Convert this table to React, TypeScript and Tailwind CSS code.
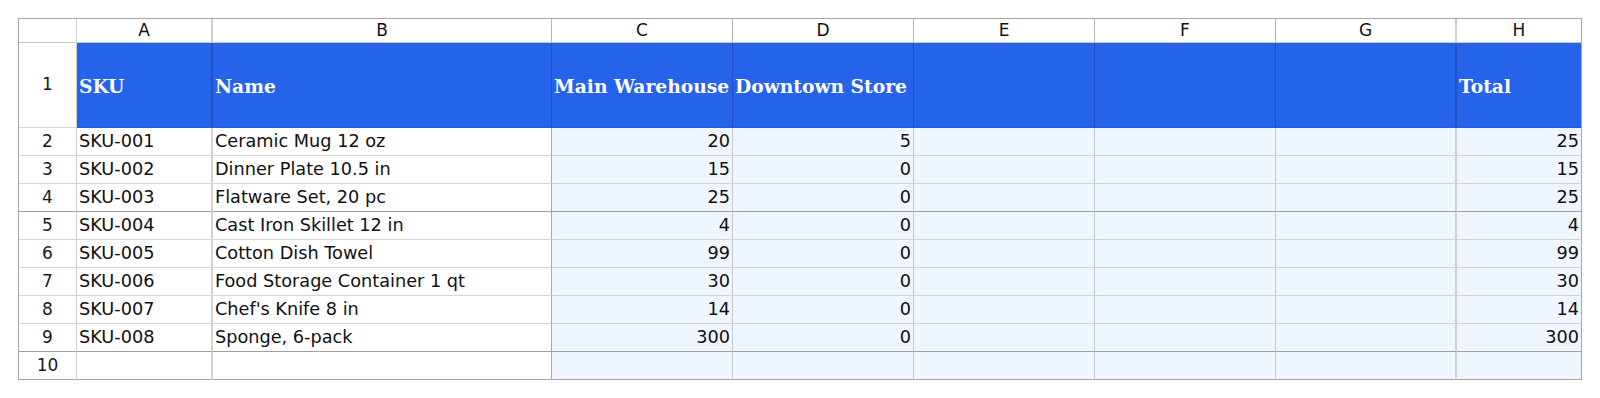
import React from 'react';

type Row = [string, string, number, number, number];

const rows: Row[] = [
    ['SKU-001', 'Ceramic Mug 12 oz', 20, 5, 25],
    ['SKU-002', 'Dinner Plate 10.5 in', 15, 0, 15],
    ['SKU-003', 'Flatware Set, 20 pc', 25, 0, 25],
    ['SKU-004', 'Cast Iron Skillet 12 in', 4, 0, 4],
    ['SKU-005', 'Cotton Dish Towel', 99, 0, 99],
    ['SKU-006', 'Food Storage Container 1 qt', 30, 0, 30],
    ['SKU-007', "Chef's Knife 8 in", 14, 0, 14],
    ['SKU-008', 'Sponge, 6-pack', 300, 0, 300],
];

const letters = ['A', 'B', 'C', 'D', 'E', 'F', 'G', 'H'];

const sans = "font-['DejaVu_Sans',sans-serif]";

// right border per column (index 0 = row header)
const rightBorder = [
    'border-r border-r-[#d0d0d0]',
    'border-r-2 border-r-[#d2d2d2]',
    'border-r border-r-[#a9a9a9]',
    'border-r border-r-[#c3c9d2]',
    'border-r border-r-[#c3c9d2]',
    'border-r border-r-[#c3c9d2]',
    'border-r border-r-[#c3c9d2]',
    'border-r-2 border-r-[#cdd1d6]',
    'border-r border-r-[#a6a6a6]',
];

function DataRow({ num, row }: { num: number; row: Row | null }) {
    // darker separators below rows 4 and 9, outer border below row 10
    const bottom =
        num === 10
            ? 'border-b border-b-[#a6a6a6]'
            : num === 4 || num === 9
              ? 'border-b border-b-[#a0a0a0]'
              : 'border-b border-b-[#d4d4d4]';
    const cells = row ? [row[0], row[1], row[2], row[3], '', '', '', row[4]] : ['', '', '', '', '', '', '', ''];

    return (
        <>
            <div className={`h-[28px] flex items-center justify-center bg-white text-[17px] text-[#1a1a1a] ${sans} ${rightBorder[0]} ${bottom}`}>
                {num}
            </div>
            {cells.map((value, i) => {
                const shaded = i >= 2;
                const numeric = typeof value === 'number';
                return (
                    <div
                        key={i}
                        className={`h-[28px] flex items-center px-[2px] text-[17.7px] text-[#111] whitespace-nowrap overflow-hidden ${sans} ${
                            shaded ? 'bg-[#eff6ff]' : 'bg-white'
                        } ${numeric ? 'justify-end' : 'justify-start'} ${rightBorder[i + 1]} ${bottom}`}
                    >
                        {value}
                    </div>
                );
            })}
        </>
    );
}

export default function App() {
    const headers = ['SKU', 'Name', 'Main Warehouse', 'Downtown Store', '', '', '', 'Total'];

    return (
        <div className="w-[1600px] h-[398px] bg-white pt-[18px] pl-[18px]">
            <div className="grid w-fit grid-cols-[58px_136px_339px_181px_181px_181px_181px_181px_125px] border-l border-t border-[#a6a6a6]">
                {/* Column letters */}
                <div className={`h-[24px] bg-white border-b border-b-[#c8c8c8] ${rightBorder[0]}`} />
                {letters.map((l, i) => (
                    <div
                        key={l}
                        className={`h-[24px] flex items-center justify-center bg-white text-[17px] text-[#111] ${sans} border-b border-b-[#c8c8c8] ${
                            i === 7 ? 'border-r border-r-[#a6a6a6]' : i === 0 || i === 6 ? 'border-r-2 border-r-[#cfcfcf]' : 'border-r border-r-[#b4b4b4]'
                        }`}
                    >
                        {l}
                    </div>
                ))}

                {/* Row 1: header */}
                <div className={`h-[85px] flex items-center justify-center bg-white text-[17px] text-[#1a1a1a] ${sans} ${rightBorder[0]} border-b border-b-[#d4d4d4]`}>
                    1
                </div>
                {headers.map((h, i) => (
                    <div
                        key={i}
                        className={`h-[85px] flex items-center px-[2px] pt-[2px] bg-[#2563eb] text-white font-bold text-[18.7px] whitespace-nowrap font-['DejaVu_Serif',serif] border-b border-b-[#2a5bd6] ${
                            i === 7 ? 'border-r border-r-[#a6a6a6]' : i === 0 || i === 6 ? 'border-r-2 border-r-[#2352c8]' : 'border-r border-r-[#1f50c8]'
                        }`}
                    >
                        {h}
                    </div>
                ))}

                {rows.map((row, i) => (
                    <DataRow key={i} num={i + 2} row={row} />
                ))}
                <DataRow num={10} row={null} />
            </div>
        </div>
    );
}
